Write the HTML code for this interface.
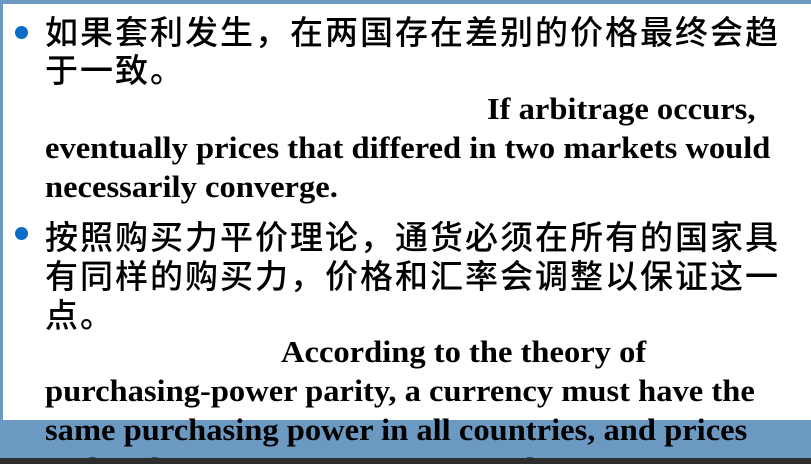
<!DOCTYPE html>
<html><head><meta charset="utf-8"><style>
html,body{margin:0;padding:0;overflow:hidden;width:811px;height:464px;}
body{position:relative;background:#6b99c2;}
.w{position:absolute;left:3px;top:4px;width:808px;height:416px;background:#fff;}
.bar{position:absolute;left:0;top:458px;width:811px;height:6px;background:#2d2d2d;}
.zh{position:absolute;left:45px;font-family:"Liberation Sans","Noto Sans CJK SC",sans-serif;font-size:33px;letter-spacing:2px;color:#000;white-space:nowrap;line-height:1;font-weight:500;}
.en{position:absolute;left:45px;font-family:"Liberation Serif",serif;font-weight:bold;font-size:31px;color:#000;white-space:nowrap;line-height:1;transform:scaleX(1.05);transform-origin:0 0;}
.b{position:absolute;left:15px;width:13px;height:13px;border-radius:50%;background:#0a6cc4;}
</style></head><body>
<div class="w"></div>
<div class="b" style="top:26px"></div>
<div class="zh" style="top:16px">如果套利发生，在两国存在差别的价格最终会趋</div>
<div class="zh" style="top:54px">于一致。</div>
<div class="en" style="top:93px;left:487px">If arbitrage occurs,</div>
<div class="en" style="top:132px">eventually prices that differed in two markets would</div>
<div class="en" style="top:171px">necessarily converge.</div>
<div class="b" style="top:227px"></div>
<div class="zh" style="top:221px">按照购买力平价理论，通货必须在所有的国家具</div>
<div class="zh" style="top:260px">有同样的购买力，价格和汇率会调整以保证这一</div>
<div class="zh" style="top:299px">点。</div>
<div class="en" style="top:336px;left:281px">According to the theory of</div>
<div class="en" style="top:375px">purchasing-power parity, a currency must have the</div>
<div class="en" style="top:414px">same purchasing power in all countries, and prices</div>
<div class="en" style="top:453px">and exchange rates must move so that</div>
<div class="bar"></div>
</body></html>
